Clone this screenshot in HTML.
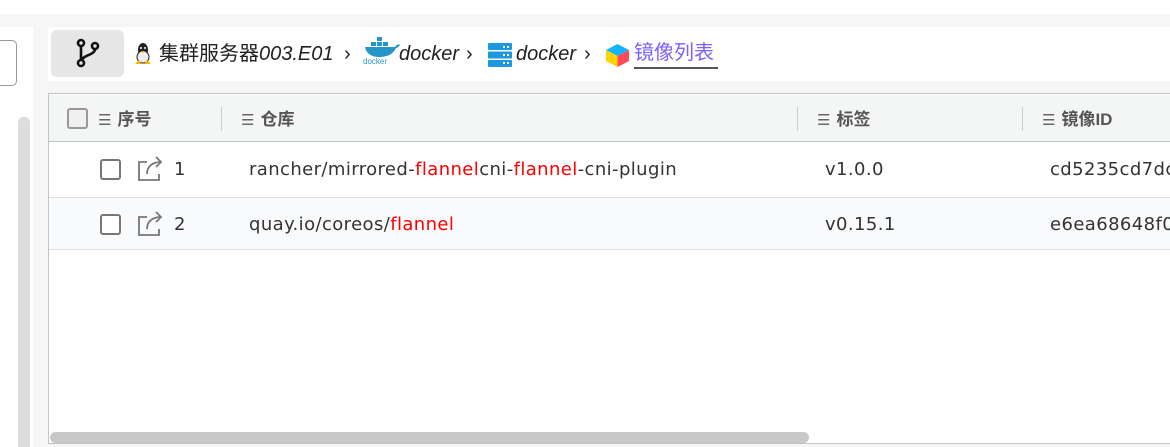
<!DOCTYPE html>
<html><head><meta charset="utf-8"><style>
*{margin:0;padding:0;box-sizing:border-box}
body{width:1170px;height:447px;overflow:hidden;background:#fff;font-family:"Liberation Sans","Noto Sans CJK SC",sans-serif;position:relative;color:#333}
.a{position:absolute}
.t{font-size:18px;white-space:nowrap;font-family:"DejaVu Sans","Noto Sans CJK SC",sans-serif;letter-spacing:0.4px}
.h{font-size:17px;font-weight:bold;color:#555;white-space:nowrap;line-height:20px}
.h span{font-weight:normal;font-size:15px;color:#666;margin-right:6px}
.cb{position:absolute;width:21px;height:21px;border:2px solid #777;border-radius:3px;background:#fff}
.r{color:#f00}
.bc{position:absolute;font-size:20px;white-space:nowrap;color:#222;line-height:24px}
</style></head><body>
<div class="a" style="left:0;top:14px;width:1170px;height:433px;background:#f6f6f6"></div>
<div class="a" style="left:0;top:27px;width:33px;height:420px;background:#fff"></div>
<div class="a" style="left:-6px;top:40px;width:23px;height:46px;border:1.5px solid #999;border-radius:5px;background:#fff"></div>
<div class="a" style="left:18px;top:117px;width:12px;height:330px;background:#ddd;border-radius:5px 5px 0 0"></div>
<div class="a" style="left:48px;top:27px;width:1122px;height:54px;background:#fff"></div>
<div class="a" style="left:51px;top:30px;width:73px;height:47px;background:#e6e6e6;border-radius:6px"></div>
<svg class="a" style="left:74px;top:38px" width="28" height="30" viewBox="0 0 28 30" fill="none" stroke="#111" stroke-width="2.6"><circle cx="7" cy="5" r="3"/><circle cx="7" cy="25" r="3"/><circle cx="21" cy="8" r="3"/><path d="M7 8v14M21 11c0 6-12 6-13 11"/></svg>
<svg class="a" style="left:133px;top:42px" width="20" height="24" viewBox="0 0 20 24"><ellipse cx="10" cy="8" rx="5" ry="7" fill="#222"/><ellipse cx="10" cy="15" rx="6" ry="6" fill="#eee" stroke="#222"/><path d="M2 22l4-4 3 4zM18 22l-4-4-3 4z" fill="#f5b400"/><circle cx="8" cy="6" r="1" fill="#fff"/><circle cx="12" cy="6" r="1" fill="#fff"/><path d="M8 9h4l-2 2z" fill="#f5b400"/></svg>
<div class="bc" style="left:159px;top:42px">集群服务器<i>003.E01</i></div>
<div class="bc" style="left:344px;top:42px">›</div>
<svg class="a" style="left:362px;top:34px" width="38" height="32" viewBox="0 0 38 32"><g fill="#2496c8"><rect x="9" y="8" width="5" height="4"/><rect x="15" y="8" width="5" height="4"/><rect x="21" y="8" width="5" height="4"/><rect x="15" y="3" width="5" height="4"/><path d="M3 13h30c2-3 4-3 5-2-1 1-2 3-4 3-3 7-10 9-17 9-8 0-13-4-14-10z"/></g><text x="1" y="30" font-size="8" fill="#2496c8" font-family="Liberation Sans">docker</text></svg>
<div class="bc" style="left:399px;top:42px"><i>docker</i></div>
<div class="bc" style="left:466px;top:42px">›</div>
<svg class="a" style="left:488px;top:43px" width="24" height="24" viewBox="0 0 24 24"><g fill="#1b98de"><rect x="0" y="0" width="24" height="7" rx="1"/><rect x="0" y="8.5" width="24" height="7" rx="1"/><rect x="0" y="17" width="24" height="7" rx="1"/></g><g fill="#fff"><rect x="15" y="3" width="2" height="2"/><rect x="19" y="3" width="2" height="2"/><rect x="15" y="11" width="2" height="2"/><rect x="19" y="11" width="2" height="2"/><rect x="15" y="19" width="2" height="2"/><rect x="19" y="19" width="2" height="2"/></g></svg>
<div class="bc" style="left:516px;top:42px"><i>docker</i></div>
<div class="bc" style="left:584px;top:42px">›</div>
<svg class="a" style="left:605px;top:43px" width="25" height="25" viewBox="0 0 25 25"><path d="M12.5 1L24 7 12.5 13 1 7z" fill="#12b4ff"/><path d="M1 7l11.5 6v11L1 18z" fill="#ffd400"/><path d="M24 7L12.5 13v11L24 18z" fill="#ff4a5a"/></svg>
<div class="bc" style="left:634px;top:41px;color:#7b61ff;font-size:20px">镜像列表</div>
<div class="a" style="left:634px;top:67px;width:84px;height:2px;background:#555"></div>

<div class="a" style="left:48px;top:93px;width:1122px;height:351px;background:#fff;border:1.5px solid #c0c4c8;border-right:none"></div>
<div class="a" style="left:49px;top:95px;width:1121px;height:47px;background:#f4f5f5;border-bottom:1.5px solid #c0c4c8"></div>
<div class="cb" style="left:67px;top:108px;border-color:#999;background:#f0f0f0"></div>
<div class="a" style="left:221px;top:107px;width:1px;height:24px;background:#ccc"></div>
<div class="a" style="left:797px;top:107px;width:1px;height:24px;background:#ccc"></div>
<div class="a" style="left:1022px;top:107px;width:1px;height:24px;background:#ccc"></div>
<div class="a h" style="left:98px;top:110px"><span>☰</span>序号</div>
<div class="a h" style="left:241px;top:110px"><span>☰</span>仓库</div>
<div class="a h" style="left:817px;top:110px"><span>☰</span>标签</div>
<div class="a h" style="left:1042px;top:110px"><span>☰</span>镜像ID</div>

<div class="a" style="left:49px;top:197px;width:1121px;height:53px;background:#f9fafc;border-top:1.5px solid #dcdfe3;border-bottom:1.5px solid #dcdfe3"></div>
<div class="cb" style="left:100px;top:159px"></div>
<div class="cb" style="left:100px;top:214px"></div>
<svg class="a" style="left:137px;top:155px" width="28" height="27" viewBox="0 0 28 27" fill="none" stroke="#777" stroke-width="1.8"><path d="M10 7H2v18h20v-6"/><path d="M10 19c0-8 6-12 14-12M19 2l5 5-5 5"/></svg>
<svg class="a" style="left:137px;top:210px" width="28" height="27" viewBox="0 0 28 27" fill="none" stroke="#777" stroke-width="1.8"><path d="M10 7H2v18h20v-6"/><path d="M10 19c0-8 6-12 14-12M19 2l5 5-5 5"/></svg>
<div class="a t" style="left:174px;top:159px">1</div>
<div class="a t" style="left:174px;top:214px">2</div>
<div class="a t" style="left:249px;top:159px">rancher/mirrored-<span class="r">flannel</span>cni-<span class="r">flannel</span>-cni-plugin</div>
<div class="a t" style="left:249px;top:214px">quay.io/coreos/<span class="r">flannel</span></div>
<div class="a t" style="left:825px;top:159px">v1.0.0</div>
<div class="a t" style="left:825px;top:214px">v0.15.1</div>
<div class="a t" style="left:1050px;top:159px">cd5235cd7dc</div>
<div class="a t" style="left:1050px;top:214px">e6ea68648f0</div>
<div class="a" style="left:50px;top:432px;width:759px;height:11px;background:#c8c8c8;border-radius:6px"></div>
</body></html>
